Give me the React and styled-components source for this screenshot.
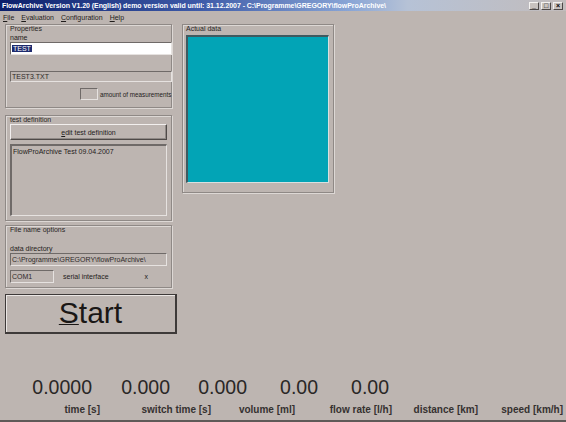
import React from "react";
import styled, { createGlobalStyle } from "styled-components";

const GlobalStyle = createGlobalStyle`
  html, body {
    margin: 0;
    padding: 0;
    background: #bdb5b1;
  }
  * {
    box-sizing: border-box;
  }
`;

const Window = styled.div`
  width: 566px;
  height: 422px;
  background: #bdb5b1;
  display: flex;
  flex-direction: column;
  font-family: "Liberation Sans", Arial, sans-serif;
  color: #1f1c1b;
  overflow: hidden;
  border-bottom: 2px solid #5f5a58;
`;

const TitleBar = styled.div`
  height: 11px;
  flex: none;
  display: flex;
  align-items: center;
  justify-content: space-between;
  padding: 0 3px 0 2px;
  background: linear-gradient(
    to right,
    #0c1f6a 0%,
    #3d5aa8 35%,
    #8aa6d6 62%,
    #b6c2d6 72%,
    #c2bcbc 100%
  );
`;

const TitleText = styled.span`
  color: #fff;
  font-weight: bold;
  font-size: 7px;
  white-space: nowrap;
  letter-spacing: -0.05px;
`;

const TitleButtons = styled.div`
  display: flex;
  gap: 2px;
`;

const TitleButton = styled.div`
  width: 10px;
  height: 8px;
  background: #c8c2bf;
  border-top: 1px solid #f4f2f0;
  border-left: 1px solid #f4f2f0;
  border-right: 1px solid #4d4847;
  border-bottom: 1px solid #4d4847;
  display: flex;
  align-items: center;
  justify-content: center;
  font-size: 7px;
  font-weight: bold;
  line-height: 1;
  color: #000;
`;

const MenuBar = styled.div`
  height: 12px;
  flex: none;
  display: flex;
  align-items: center;
  gap: 7px;
  padding-left: 3px;
  font-size: 7px;
`;

const Main = styled.div`
  display: flex;
  gap: 5px;
  padding: 1px 0 0 5px;
`;

const LeftColumn = styled.div`
  width: 172px;
  display: flex;
  flex-direction: column;
`;

const Group = styled.div`
  width: ${(p) => p.$width || 167}px;
  height: ${(p) => p.$height}px;
  margin-top: ${(p) => p.$top || 0}px;
  border: 1px solid #8f8986;
  box-shadow: inset 1px 1px 0 #ddd8d5, 1px 1px 0 #ddd8d5;
  display: flex;
  flex-direction: column;
  padding: 0 0 0 4px;
`;

const Caption = styled.span`
  font-size: 7px;
  line-height: 9px;
  margin-top: -1px;
  color: #2a2625;
  white-space: nowrap;
`;

const Label = styled.span`
  font-size: ${(p) => p.$size || 7}px;
  line-height: 9px;
  margin-top: ${(p) => p.$top || 0}px;
  margin-left: ${(p) => p.$left || 0}px;
  white-space: nowrap;
`;

const TextInput = styled.div`
  height: ${(p) => p.$h || 13}px;
  width: ${(p) => p.$width}px;
  flex: none;
  margin-top: ${(p) => p.$top || 0}px;
  background: ${(p) => (p.$white ? "#fff" : "#bdb5b1")};
  border-top: 1px solid #6f6a68;
  border-left: 1px solid #6f6a68;
  border-bottom: 1px solid #e6e2e0;
  border-right: 1px solid #e6e2e0;
  font-size: 7px;
  line-height: ${(p) => (p.$h || 13) - 2}px;
  padding-left: 1px;
  white-space: nowrap;
  overflow: hidden;
  color: #2e2a29;
`;

const Selected = styled.span`
  background: #1d2a6e;
  color: #fff;
  padding: 0 1px;
`;

const Row = styled.div`
  display: flex;
  align-items: center;
  gap: ${(p) => p.$gap || 2}px;
  margin-top: ${(p) => p.$top || 0}px;
  margin-left: ${(p) => p.$left || 0}px;
`;

const SmallBox = styled.div`
  width: 18px;
  height: 12px;
  flex: none;
  border-top: 1px solid #6f6a68;
  border-left: 1px solid #6f6a68;
  border-bottom: 1px solid #e6e2e0;
  border-right: 1px solid #e6e2e0;
`;

const RaisedButton = styled.div`
  width: 157px;
  height: 16px;
  border-top: 1px solid #f2efee;
  border-left: 1px solid #f2efee;
  border-right: 1px solid #4f4a48;
  border-bottom: 1px solid #4f4a48;
  box-shadow: inset -1px -1px 0 #8f8986;
  display: flex;
  align-items: center;
  justify-content: center;
  font-size: 7px;
`;

const Memo = styled.div`
  width: 157px;
  height: 72px;
  margin-top: 4px;
  border-top: 2px solid #6f6a68;
  border-left: 2px solid #6f6a68;
  border-bottom: 1px solid #e6e2e0;
  border-right: 1px solid #e6e2e0;
  font-size: 7px;
  padding: 2px 1px;
`;

const StartButton = styled.div`
  width: 172px;
  height: 40px;
  margin-top: 6px;
  border: 1px solid #3e3a39;
  border-bottom-width: 2px;
  border-right-width: 2px;
  box-shadow: inset 1px 1px 0 #ebe7e5;
  display: flex;
  align-items: center;
  justify-content: center;
  font-size: 30px;
  color: #1a1716;
  padding-bottom: 1px;

  u {
    text-decoration-thickness: 1px;
  }
`;

const DataGroup = styled(Group)`
  width: 152px;
  height: 169px;
  padding: 0 0 0 3px;
`;

const DataScreen = styled.div`
  width: 143px;
  height: 148px;
  margin-top: 2px;
  background: #02a4b6;
  border-top: 2px solid #3f5a60;
  border-left: 2px solid #3f5a60;
  border-bottom: 1px solid #d9e0e0;
  border-right: 1px solid #d9e0e0;
`;

const Readouts = styled.div`
  flex: 1;
  display: flex;
  flex-direction: column;
  justify-content: flex-end;
  padding-bottom: 4px;
`;

const ReadoutRow = styled.div`
  display: flex;
`;

const Value = styled.div`
  width: ${(p) => p.$w}px;
  text-align: right;
  font-size: 19.5px;
  line-height: 22px;
  color: #2a2726;
`;

const Unit = styled.div`
  width: ${(p) => p.$w}px;
  text-align: right;
  font-size: 10px;
  font-weight: bold;
  line-height: 12px;
  margin-top: 6px;
  color: #353130;
  white-space: nowrap;
`;

const values = [
  { w: 92, v: "0.0000" },
  { w: 78, v: "0.000" },
  { w: 77, v: "0.000" },
  { w: 71, v: "0.00" },
  { w: 71, v: "0.00" },
];

const units = [
  { w: 100, t: "time [s]" },
  { w: 111, t: "switch time [s]" },
  { w: 84, t: "volume [ml]" },
  { w: 97, t: "flow rate [l/h]" },
  { w: 86, t: "distance [km]" },
  { w: 85, t: "speed [km/h]" },
];

export default function App() {
  return (
    <>
      <GlobalStyle />
      <Window>
        <TitleBar>
          <TitleText>
            FlowArchive Version V1.20 (English) demo version valid until:
            31.12.2007 - C:\Programme\GREGORY\flowProArchive\
          </TitleText>
          <TitleButtons>
            <TitleButton>_</TitleButton>
            <TitleButton>□</TitleButton>
            <TitleButton>×</TitleButton>
          </TitleButtons>
        </TitleBar>

        <MenuBar>
          <span><u>F</u>ile</span>
          <span><u>E</u>valuation</span>
          <span><u>C</u>onfiguration</span>
          <span><u>H</u>elp</span>
        </MenuBar>

        <Main>
          <LeftColumn>
            <Group $height={84}>
              <Caption>Properties</Caption>
              <Label>name</Label>
              <TextInput $white $width={162}>
                <Selected>TEST</Selected>
              </TextInput>
              <TextInput $width={162} $h={11} $top={16}>TEST3.TXT</TextInput>
              <Row $top={6} $left={70} $gap={2}>
                <SmallBox />
                <Label $size={6.3}>amount of measurements</Label>
              </Row>
            </Group>

            <Group $height={106} $top={7}>
              <Caption>test definition</Caption>
              <RaisedButton>
                <span><u>e</u>dit test definition</span>
              </RaisedButton>
              <Memo>FlowProArchive Test 09.04.2007</Memo>
            </Group>

            <Group $height={63} $top={4}>
              <Caption>File name options</Caption>
              <Label $top={10}>data directory</Label>
              <TextInput $width={157}>C:\Programme\GREGORY\flowProArchive\</TextInput>
              <Row $top={4} $gap={9}>
                <TextInput $width={44}>COM1</TextInput>
                <Label>serial interface</Label>
                <Label $left={27}>x</Label>
              </Row>
            </Group>

            <StartButton>
              <span><u>S</u>tart</span>
            </StartButton>
          </LeftColumn>

          <DataGroup $height={169}>
            <Caption>Actual data</Caption>
            <DataScreen />
          </DataGroup>
        </Main>

        <Readouts>
          <ReadoutRow>
            {values.map((c, i) => (
              <Value key={i} $w={c.w}>{c.v}</Value>
            ))}
          </ReadoutRow>
          <ReadoutRow>
            {units.map((c, i) => (
              <Unit key={i} $w={c.w}>{c.t}</Unit>
            ))}
          </ReadoutRow>
        </Readouts>
      </Window>
    </>
  );
}
